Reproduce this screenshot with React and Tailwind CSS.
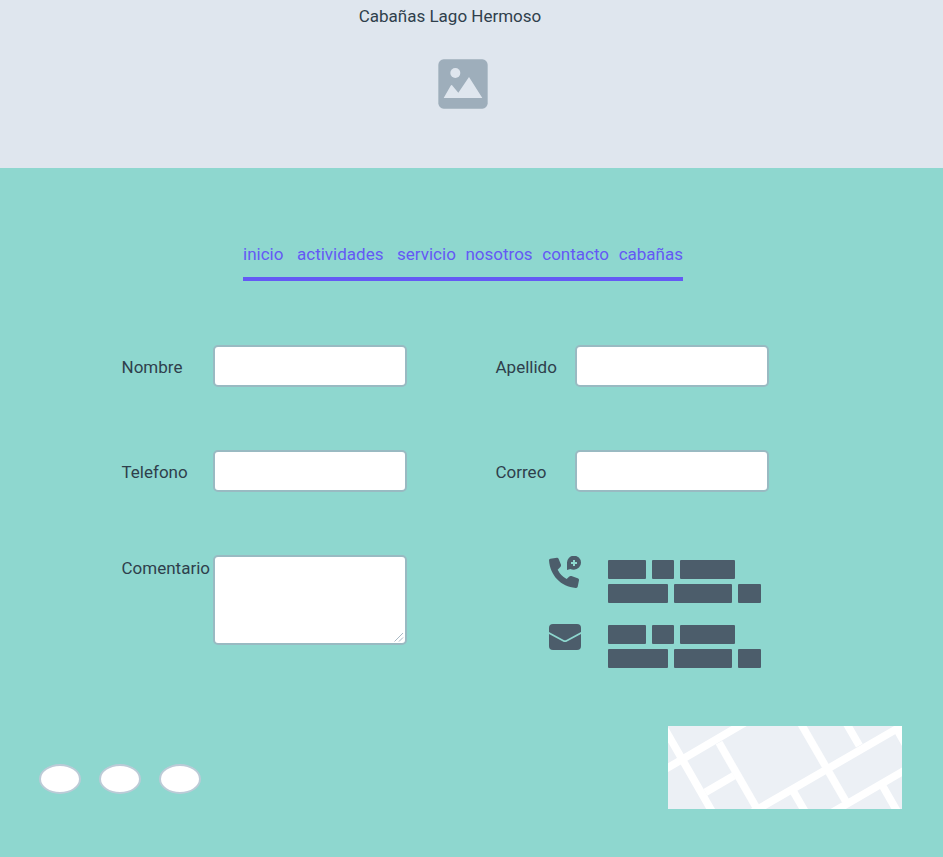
const links = [
  { name: "inicio", space: "mr-3" },
  { name: "actividades", space: "mr-3" },
  { name: "servicio", space: "mr-2" },
  { name: "nosotros", space: "mr-2" },
  { name: "contacto", space: "mr-2" },
  { name: "cabañas", space: "" },
];

function ImageIcon() {
  return (
    <svg viewBox="0 0 150 150" className="size-[50px]" role="img" aria-label="Logo">
      <rect x="1" y="1" width="148" height="148" rx="16" fill="#9eaebb" />
      <circle cx="52" cy="42" r="15" fill="#dfe6ee" />
      <path d="M17 117 38 80Q41 76 44 81L61 101 93 54 133 117Z" fill="#dfe6ee" />
    </svg>
  );
}

function PhoneIcon() {
  return (
    <svg viewBox="0 0 96 96" className="h-8 w-8 shrink-0" role="img" aria-label="Telefono">
      <path
        d="M4 8 24 5Q28 5 29 9L36 26Q37 30 34 33L26 41Q35 59 53 69L60 62Q63 59 67 60L86 67Q91 69 90 73L86 92Q85 96 80 96C36 93 3 58 0 13Q0 9 4 8Z"
        fill="#4c5d6b"
      />
      <path d="M54 42V21A21 21 0 1 1 75 41Q68 41 64 39Z" fill="#4c5d6b" />
      <path d="M75 12V30M66 21H84" stroke="#8ed7cf" strokeWidth="6" />
    </svg>
  );
}

function MailIcon() {
  return (
    <svg viewBox="0 0 96 78" className="h-[26px] w-8 shrink-0" role="img" aria-label="Correo">
      <rect width="96" height="78" rx="12" fill="#4c5d6b" />
      <path d="M-2 26 43 50Q48 53 53 50L98 26" fill="none" stroke="#8ed7cf" strokeWidth="5" />
    </svg>
  );
}

function StreetMap() {
  return (
    <svg viewBox="24 18 702 249" className="h-[83px] w-[234px] bg-[#ecf0f5]" role="img" aria-label="Mapa">
      <g stroke="#ffffff" strokeWidth="23" fill="none">
        <path d="M4 154.500 258 6" />
        <path d="M270 281 746 6" />
        <path d="M500 287 746 144" />
        <path d="M4 9 172 302" />
        <path d="M177 68 296 275" />
        <path d="M417 1 562 252" />
        <path d="M554 1 598 77" />
        <path d="M136 217 222 167" />
        <path d="M401 216 441 285" />
        <path d="M669 200 719 287" />
        <path d="M713 32 745 88" />
      </g>
    </svg>
  );
}

function Bar({ width }) {
  return <span className={`h-[19px] rounded-[1px] bg-[#4c5d6b] ${width}`} />;
}

function TextLines() {
  return (
    <div className="flex flex-col gap-[5px]" aria-hidden="true">
      <div className="flex gap-1.5">
        <Bar width="w-[38px]" />
        <Bar width="w-[22px]" />
        <Bar width="w-[55px]" />
      </div>
      <div className="flex gap-1.5">
        <Bar width="w-[60px]" />
        <Bar width="w-[58px]" />
        <Bar width="w-[23px]" />
      </div>
    </div>
  );
}

function Field({ id, label, type, labelWidth }) {
  return (
    <div className="flex items-center">
      <label htmlFor={id} className={`pt-px ${labelWidth}`}>
        {label}
      </label>
      <input
        id={id}
        type={type}
        className="h-[42px] w-[194px] rounded-[5px] border-2 border-[#99bac2] bg-white px-2"
      />
    </div>
  );
}

export default function App() {
  return (
    <div className="flex min-h-screen flex-col bg-[#8ed7cf] font-['Roboto','Noto_Sans',sans-serif] text-[17px] leading-6 text-[#2f3f4c]">
      <header className="flex h-[168px] flex-col items-center gap-[31px] bg-[#dfe6ee] pt-1">
        <h1 className="pr-[43px]">Cabañas Lago Hermoso</h1>
        <div className="pr-[17px]">
          <ImageIcon />
        </div>
      </header>

      <main>
        <div className="flex justify-center pt-[74px] pr-[17px]">
          <nav className="flex w-[440px] justify-between border-b-4 border-[#6459f5] pb-[11px] text-[#6459f5]">
            {links.map((link) => (
              <a key={link.name} href={`#${link.name}`} className={link.space}>
                {link.name}
              </a>
            ))}
          </nav>
        </div>

        <form className="flex justify-center pt-16 pr-[53px]">
          <div className="grid grid-cols-[auto_auto] gap-x-[89px] gap-y-[63px]">
            <Field id="nombre" label="Nombre" type="text" labelWidth="w-[91px]" />
            <Field id="apellido" label="Apellido" type="text" labelWidth="w-[79px]" />
            <Field id="telefono" label="Telefono" type="tel" labelWidth="w-[91px]" />
            <Field id="correo" label="Correo" type="email" labelWidth="w-[79px]" />
            <div className="flex items-start">
              <label htmlFor="comentario" className="w-[91px] pt-px">
                Comentario
              </label>
              <div className="relative flex">
                <textarea
                  id="comentario"
                  className="h-[90px] w-[194px] resize-none rounded-[5px] border-2 border-[#99bac2] bg-white px-2"
                />
                <svg viewBox="0 0 10 10" className="pointer-events-none absolute right-[3px] bottom-[3px] size-2.5" aria-hidden="true">
                  <path d="M0.500 9.500 9 1M5 9.500 9 5.500" stroke="#a9b9c4" fill="none" />
                </svg>
              </div>
            </div>
            <div className="flex flex-col gap-[21px] pt-px pl-[53px]">
              <div className="flex items-start gap-[27px]">
                <PhoneIcon />
                <div className="pt-1">
                  <TextLines />
                </div>
              </div>
              <div className="flex items-start gap-[27px]">
                <MailIcon />
                <div className="pt-px">
                  <TextLines />
                </div>
              </div>
            </div>
          </div>
        </form>
      </main>

      <footer className="flex items-center justify-between pt-[58px] pr-[41px] pb-12 pl-[39px]">
        <div className="flex gap-[18px] pt-[22px]" aria-hidden="true">
          <span className="h-[30px] w-[42px] rounded-[50%] border-2 border-[#bccbd7] bg-white" />
          <span className="h-[30px] w-[42px] rounded-[50%] border-2 border-[#bccbd7] bg-white" />
          <span className="h-[30px] w-[42px] rounded-[50%] border-2 border-[#bccbd7] bg-white" />
        </div>
        <StreetMap />
      </footer>
    </div>
  );
}
